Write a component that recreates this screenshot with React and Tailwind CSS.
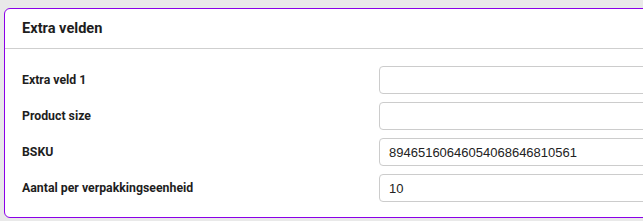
import React from 'react';

const fields = [
    { label: 'Extra veld 1', value: '' },
    { label: 'Product size', value: '' },
    { label: 'BSKU', value: '89465160646054068646810561' },
    { label: 'Aantal per verpakkingseenheid', value: '10' },
];

export default function App() {
    return (
        <div className="w-[643px] h-[221px] overflow-hidden bg-[#e9e9e9] pt-[8px] pl-[4px]">
            <div className="w-[720px] bg-white border border-[#8b00e8] rounded-[6px] font-['Roboto',sans-serif] text-[#1e1e1e]">
                <div className="h-[40px] flex items-center pl-[17px] border-b border-[#cfcfcf]">
                    <h2 className="text-[14.6px] font-bold">Extra velden</h2>
                </div>
                <div className="pt-[17px] pb-[15px] flex flex-col gap-[8px]">
                    {fields.map((f) => (
                        <div key={f.label} className="flex items-center">
                            <label className="w-[374px] pl-[17px] text-[12.3px] font-bold">
                                {f.label}
                            </label>
                            <input
                                readOnly
                                value={f.value}
                                className="w-[320px] h-[28px] px-[9px] border border-[#cccccc] rounded-[4px] text-[13px] text-[#222] font-['Liberation_Sans',Arial,sans-serif] outline-none"
                            />
                        </div>
                    ))}
                </div>
            </div>
        </div>
    );
}
